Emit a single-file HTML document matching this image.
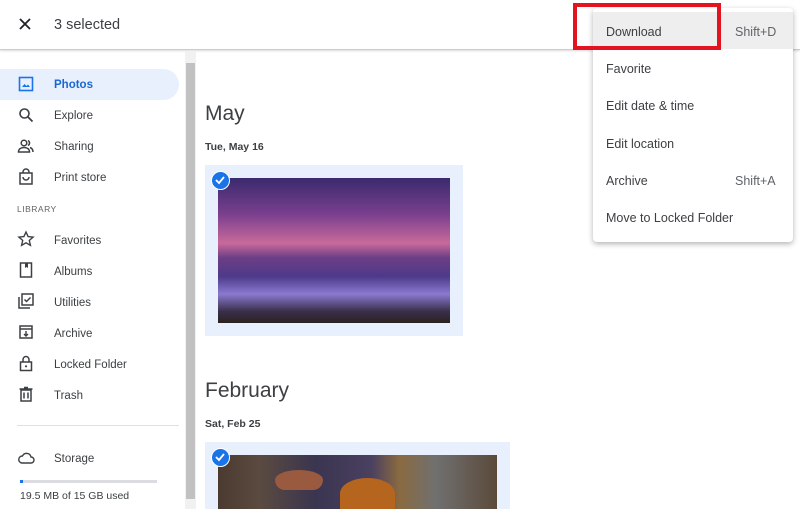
<!DOCTYPE html>
<html><head><style>
body{margin:0;width:800px;height:509px;overflow:hidden;background:#fff;font-family:"Liberation Sans",sans-serif;position:relative;color:#3c4043}
.a{position:absolute}
.nav{position:absolute;left:54px;font-size:11.5px;color:#3c4043;margin-top:2px}
.ic{position:absolute;left:17px;width:18px;height:18px}
.mi{position:absolute;left:606px;font-size:12.5px;color:#3c4043;margin-top:1px}
.sc{position:absolute;left:735px;font-size:12.5px;color:#5f6368;margin-top:1px}
</style></head><body>
<div class="a" style="left:0;top:0;width:800px;height:49px;border-bottom:1px solid #ccc;box-shadow:0 1px 2px rgba(0,0,0,.15)"></div>
<svg class="a" style="left:18px;top:17px" width="14" height="14" viewBox="0 0 14 14"><path d="M2 2L12 12M12 2L2 12" stroke="#202124" stroke-width="1.8"/></svg>
<div class="a" style="left:54px;top:17px;font-size:14.5px;color:#3c4043">3 selected</div>

<div class="a" style="left:0;top:69px;width:179px;height:31px;background:#e8f0fe;border-radius:0 16px 16px 0"></div>
<svg class="ic" style="top:75px" viewBox="0 0 18 18"><rect x="2.5" y="2.5" width="13" height="13" fill="none" stroke="#1a73e8" stroke-width="1.6"/><path d="M5 12l2.5-3 2 2 1.5-1.5L13 12z" fill="#1a73e8"/></svg>
<div class="nav" style="top:77px;color:#1967d2;font-weight:bold">Photos</div>
<svg class="ic" style="top:106px" viewBox="0 0 18 18"><circle cx="7.5" cy="7.5" r="4.5" fill="none" stroke="#3c4043" stroke-width="1.6"/><path d="M11 11l4.5 4.5" stroke="#3c4043" stroke-width="1.8"/></svg>
<div class="nav" style="top:108px">Explore</div>
<svg class="ic" style="top:137px" viewBox="0 0 18 18"><circle cx="7" cy="6" r="2.8" fill="none" stroke="#3c4043" stroke-width="1.5"/><path d="M1.5 15c0-3 2.5-4.5 5.5-4.5s5.5 1.5 5.5 4.5zM11 3.5a2.8 2.8 0 010 5M13 10.5c2 .7 3 2 3 4.5" fill="none" stroke="#3c4043" stroke-width="1.5"/></svg>
<div class="nav" style="top:139px">Sharing</div>
<svg class="ic" style="top:168px" viewBox="0 0 18 18"><rect x="3" y="5" width="12" height="11" fill="none" stroke="#3c4043" stroke-width="1.5"/><path d="M6 5V4a3 3 0 016 0v1M6 9a3 3 0 006 0" fill="none" stroke="#3c4043" stroke-width="1.5"/></svg>
<div class="nav" style="top:170px">Print store</div>
<div class="a" style="left:17px;top:204px;font-size:8.5px;color:#5f6368;letter-spacing:.5px">LIBRARY</div>
<svg class="ic" style="top:230px" viewBox="0 0 18 18"><path d="M9 2l2.1 4.6 5 .5-3.8 3.3 1.1 4.9L9 12.8l-4.4 2.5 1.1-4.9L1.9 7.1l5-.5z" fill="none" stroke="#3c4043" stroke-width="1.4"/></svg>
<div class="nav" style="top:233px">Favorites</div>
<svg class="ic" style="top:261px" viewBox="0 0 18 18"><rect x="3.5" y="2" width="11" height="14" fill="none" stroke="#3c4043" stroke-width="1.5"/><path d="M8 2v5l1.5-1 1.5 1V2" fill="#3c4043"/></svg>
<div class="nav" style="top:264px">Albums</div>
<svg class="ic" style="top:292px" viewBox="0 0 18 18"><rect x="5" y="2" width="11" height="11" fill="none" stroke="#3c4043" stroke-width="1.5"/><path d="M2 5v11h11M7.5 7.5l2 2 4-4" fill="none" stroke="#3c4043" stroke-width="1.5"/></svg>
<div class="nav" style="top:295px">Utilities</div>
<svg class="ic" style="top:323px" viewBox="0 0 18 18"><rect x="3" y="3" width="12" height="12" fill="none" stroke="#3c4043" stroke-width="1.5"/><path d="M3 6h12M9 8v5M7 11l2 2 2-2" fill="none" stroke="#3c4043" stroke-width="1.4"/></svg>
<div class="nav" style="top:326px">Archive</div>
<svg class="ic" style="top:354px" viewBox="0 0 18 18"><rect x="3.5" y="8" width="11" height="8.5" fill="none" stroke="#3c4043" stroke-width="1.5"/><path d="M6 8V5.5a3 3 0 016 0V8" fill="none" stroke="#3c4043" stroke-width="1.5"/><circle cx="9" cy="12.3" r="1.1" fill="#3c4043"/></svg>
<div class="nav" style="top:357px">Locked Folder</div>
<svg class="ic" style="top:385px" viewBox="0 0 18 18"><path d="M4 5h10v11H4zM2.5 4h13M7 2.5h4M7 7.5v6M11 7.5v6" fill="none" stroke="#3c4043" stroke-width="1.5"/></svg>
<div class="nav" style="top:388px">Trash</div>
<div class="a" style="left:17px;top:425px;width:162px;height:1px;background:#e0e0e0"></div>
<svg class="ic" style="top:449px" viewBox="0 0 18 18"><path d="M5 14h9a3 3 0 000-6 4.5 4.5 0 00-8.5-1A3.5 3.5 0 005 14z" fill="none" stroke="#3c4043" stroke-width="1.4"/></svg>
<div class="nav" style="top:451px">Storage</div>
<div class="a" style="left:20px;top:480px;width:137px;height:3px;background:#dadce0"></div>
<div class="a" style="left:20px;top:480px;width:3px;height:3px;background:#1a73e8"></div>
<div class="a" style="left:20px;top:490px;font-size:10.5px;color:#3c4043">19.5 MB of 15 GB used</div>
<div class="a" style="left:185px;top:51px;width:11px;height:458px;background:#f1f1f1"></div>
<div class="a" style="left:186px;top:63px;width:9px;height:436px;background:#c1c1c1"></div>

<div class="a" style="left:205px;top:102px;font-size:21px;color:#3c4043">May</div>
<div class="a" style="left:205px;top:141px;font-size:10.5px;font-weight:bold;color:#3c4043">Tue, May 16</div>
<div class="a" style="left:205px;top:165px;width:258px;height:171px;background:#e8f0fe"></div>
<div class="a" style="left:218px;top:178px;width:232px;height:145px;background:linear-gradient(180deg,#3b2a6e 0%,#7a3f8e 25%,#c86a9a 45%,#6c3e86 55%,#4d3a8a 68%,#8a7ad0 80%,#3a2f4a 92%,#2a2220 100%)"></div>
<div class="a" style="left:211px;top:171px;width:17px;height:17px;border-radius:50%;background:#1a73e8;border:1px solid #fff"></div>
<svg class="a" style="left:214px;top:174px" width="12" height="12"><path d="M2 6l3 3 5-6" stroke="#fff" stroke-width="1.8" fill="none"/></svg>

<div class="a" style="left:205px;top:379px;font-size:21px;color:#3c4043">February</div>
<div class="a" style="left:205px;top:418px;font-size:10.5px;font-weight:bold;color:#3c4043">Sat, Feb 25</div>
<div class="a" style="left:205px;top:442px;width:305px;height:67px;background:#e8f0fe"></div>
<div class="a" style="left:218px;top:455px;width:279px;height:54px;background:linear-gradient(90deg,#4a3a30 0%,#5a4a40 15%,#3a3550 35%,#4a4060 55%,#8a6a40 65%,#707070 78%,#5a4a3a 100%)"></div>
<div class="a" style="left:275px;top:470px;width:48px;height:20px;border-radius:50% 50% 10px 10px;background:#9a5a40"></div>
<div class="a" style="left:340px;top:478px;width:55px;height:31px;border-radius:50% 50% 0 0;background:#b5651d"></div>
<div class="a" style="left:211px;top:448px;width:17px;height:17px;border-radius:50%;background:#1a73e8;border:1px solid #fff"></div>
<svg class="a" style="left:214px;top:451px" width="12" height="12"><path d="M2 6l3 3 5-6" stroke="#fff" stroke-width="1.8" fill="none"/></svg>

<div class="a" style="left:593px;top:8px;width:200px;height:234px;background:#fff;border-radius:4px;box-shadow:0 2px 6px rgba(0,0,0,.3)"></div>
<div class="a" style="left:593px;top:12px;width:200px;height:37px;background:#eeeeee"></div>
<div class="mi" style="top:24px">Download</div><div class="sc" style="top:24px">Shift+D</div>
<div class="mi" style="top:61px">Favorite</div>
<div class="mi" style="top:98px">Edit date &amp; time</div>
<div class="mi" style="top:136px">Edit location</div>
<div class="mi" style="top:173px">Archive</div><div class="sc" style="top:173px">Shift+A</div>
<div class="mi" style="top:210px">Move to Locked Folder</div>
<div class="a" style="left:573px;top:3px;width:140px;height:39px;border:4px solid #e3141f"></div>
</body></html>
